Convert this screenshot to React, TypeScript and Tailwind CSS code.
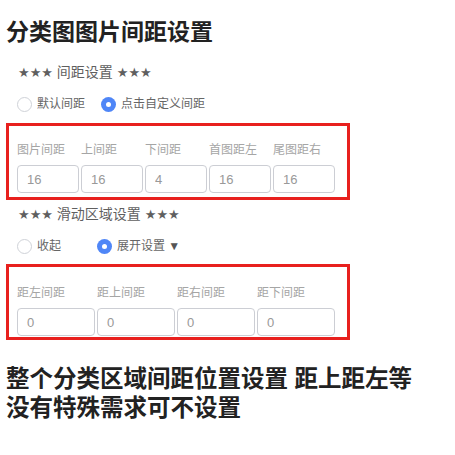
import React from 'react';

const font = { fontFamily: '"Liberation Sans", "Noto Sans CJK SC", sans-serif' };

function Stars() {
  return <span className="font-['DejaVu_Sans'] text-[13px]">★★★</span>;
}

function Radio({ checked, label, className = '' }: { checked?: boolean; label: React.ReactNode; className?: string }) {
  return (
    <div className={`flex items-center gap-[5px] ${className}`}>
      {checked ? (
        <span className="flex h-[15px] w-[15px] items-center justify-center rounded-full bg-[#4f86f7]">
          <span className="h-[5px] w-[5px] rounded-full bg-white" />
        </span>
      ) : (
        <span className="h-[15px] w-[15px] rounded-full border border-[#cfd2d8] bg-white" />
      )}
      <span className="text-[12px] leading-[20px] text-[#666]">{label}</span>
    </div>
  );
}

function Field({ label, value, width }: { label: string; value: string; width: string }) {
  return (
    <div className={`flex flex-col ${width}`}>
      <div className="text-[12px] leading-[20px] text-[#a5a5a5]">{label}</div>
      <input
        readOnly
        value={value}
        className="mt-[5px] h-[28px] w-full rounded-[4px] border border-[#ccced4] bg-white pl-[9px] text-[13px] text-[#999] outline-none"
        style={font}
      />
    </div>
  );
}

export default function App() {
  const picFields = [
    ['图片间距', '16'],
    ['上间距', '16'],
    ['下间距', '4'],
    ['首图距左', '16'],
    ['尾图距右', '16'],
  ];
  const areaFields = [
    ['距左间距', '0'],
    ['距上间距', '0'],
    ['距右间距', '0'],
    ['距下间距', '0'],
  ];

  return (
    <div className="h-[455px] w-[455px] bg-white pl-[6px] pt-[17px]" style={font}>
      <h1 className="text-[23px] font-bold leading-[30px] text-[#222]">分类图图片间距设置</h1>

      {/* 间距设置 */}
      <div className="mt-[15px] pl-[12px] text-[14px] leading-[20px] text-[#5f5f5f]">
        <Stars /> 间距设置 <Stars />
      </div>
      <div className="mt-[11px] flex pl-[11px]">
        <Radio label="默认间距" className="w-[84px]" />
        <Radio checked label="点击自定义间距" />
      </div>

      <div className="mt-[9px] flex h-[77px] w-[344px] gap-[2px] border-[3px] border-[#e8201e] pl-[8px] pt-[14px]">
        {picFields.map(([l, v]) => (
          <Field key={l} label={l} value={v} width="w-[62px]" />
        ))}
      </div>

      {/* 滑动区域设置 */}
      <div className="mt-[4px] pl-[12px] text-[14px] leading-[20px] text-[#5f5f5f]">
        <Stars /> 滑动区域设置 <Stars />
      </div>
      <div className="mt-[11px] flex pl-[11px]">
        <Radio label="收起" className="w-[80px]" />
        <Radio
          checked
          label={
            <>
              展开设置 <span className="text-[#555]">▼</span>
            </>
          }
        />
      </div>

      <div className="mt-[8px] flex h-[76px] w-[344px] gap-[2px] border-[3px] border-[#e8201e] pl-[8px] pt-[16px]">
        {areaFields.map(([l, v]) => (
          <Field key={l} label={l} value={v} width="w-[78px]" />
        ))}
      </div>

      <p className="mt-[25px] text-[23.5px] font-bold leading-[29px] text-[#222]">
        整个分类区域间距位置设置 距上距左等
        <br />
        没有特殊需求可不设置
      </p>
    </div>
  );
}
